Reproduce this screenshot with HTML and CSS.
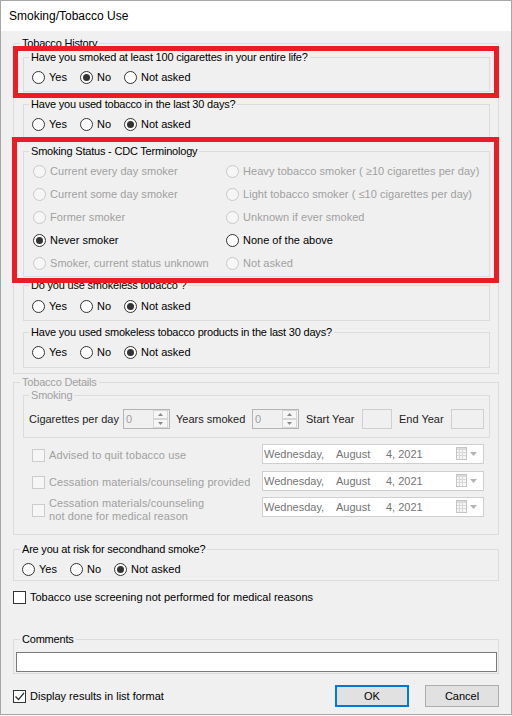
FILE: index.html
```html
<!DOCTYPE html>
<html lang="en">
<head>
    <meta charset="UTF-8">
    <title>Smoking/Tobacco Use</title>

    <link rel="stylesheet" href="styles.css">
</head>
<body>
    <div class="window">
        <div class="titlebar">Smoking/Tobacco Use</div>

        <div class="client">
            <!-- Tobacco History -->
            <fieldset class="group outer history">
                <legend>Tobacco History</legend>
                <div class="history-body">
                    <fieldset class="group question">
                        <legend>Have you smoked at least 100 cigarettes in your entire life?</legend>
                        <div class="radio-row">
                            <span class="radio"><span class="dot"></span>Yes</span>
                            <span class="radio checked"><span class="dot"></span>No</span>
                            <span class="radio"><span class="dot"></span>Not asked</span>
                        </div>
                    </fieldset>

                    <fieldset class="group question spaced">
                        <legend>Have you used tobacco in the last 30 days?</legend>
                        <div class="radio-row">
                            <span class="radio"><span class="dot"></span>Yes</span>
                            <span class="radio"><span class="dot"></span>No</span>
                            <span class="radio checked"><span class="dot"></span>Not asked</span>
                        </div>
                    </fieldset>

                    <fieldset class="group status spaced">
                        <legend>Smoking Status - CDC Terminology</legend>
                        <div class="status-grid">
                            <span class="radio off"><span class="dot"></span>Current every day smoker</span>
                            <span class="radio off"><span class="dot"></span>Heavy tobacco smoker ( ≥10 cigarettes per day)</span>
                            <span class="radio off"><span class="dot"></span>Current some day smoker</span>
                            <span class="radio off"><span class="dot"></span>Light tobacco smoker ( ≤10 cigarettes per day)</span>
                            <span class="radio off"><span class="dot"></span>Former smoker</span>
                            <span class="radio off"><span class="dot"></span>Unknown if ever smoked</span>
                            <span class="radio checked"><span class="dot"></span>Never smoker</span>
                            <span class="radio"><span class="dot"></span>None of the above</span>
                            <span class="radio off"><span class="dot"></span>Smoker, current status unknown</span>
                            <span class="radio off"><span class="dot"></span>Not asked</span>
                        </div>
                    </fieldset>

                    <fieldset class="group question smokeless">
                        <legend>Do you use smokeless tobacco ?</legend>
                        <div class="radio-row low">
                            <span class="radio"><span class="dot"></span>Yes</span>
                            <span class="radio"><span class="dot"></span>No</span>
                            <span class="radio checked"><span class="dot"></span>Not asked</span>
                        </div>
                    </fieldset>

                    <fieldset class="group question last30">
                        <legend>Have you used smokeless tobacco products in the last 30 days?</legend>
                        <div class="radio-row tall">
                            <span class="radio"><span class="dot"></span>Yes</span>
                            <span class="radio"><span class="dot"></span>No</span>
                            <span class="radio checked"><span class="dot"></span>Not asked</span>
                        </div>
                    </fieldset>
                </div>
            </fieldset>

            <!-- Tobacco Details (disabled) -->
            <fieldset class="group outer details off">
                <legend>Tobacco Details</legend>
                <div class="details-body">
                    <fieldset class="group off">
                        <legend>Smoking</legend>
                        <div class="smoking-row">
                            <span class="field-label w-cig">Cigarettes per day</span>
                            <span class="spin">
                                <span class="spin-value">0</span>
                                <svg class="spin-buttons" width="15" height="18" viewBox="0 0 15 18">
                                    <rect x="0.5" y="0.5" width="14" height="8" fill="#f6f6f6" stroke="#d6d6d6"/>
                                    <rect x="0.5" y="9.5" width="14" height="8" fill="#f6f6f6" stroke="#d6d6d6"/>
                                    <path d="M5 6h5l-2.5-3z" fill="#8a8a8a"/>
                                    <path d="M5 12h5l-2.5 3z" fill="#8a8a8a"/>
                                </svg>
                            </span>
                            <span class="field-label w-years">Years smoked</span>
                            <span class="spin">
                                <span class="spin-value">0</span>
                                <svg class="spin-buttons" width="15" height="18" viewBox="0 0 15 18">
                                    <rect x="0.5" y="0.5" width="14" height="8" fill="#f6f6f6" stroke="#d6d6d6"/>
                                    <rect x="0.5" y="9.5" width="14" height="8" fill="#f6f6f6" stroke="#d6d6d6"/>
                                    <path d="M5 6h5l-2.5-3z" fill="#8a8a8a"/>
                                    <path d="M5 12h5l-2.5 3z" fill="#8a8a8a"/>
                                </svg>
                            </span>
                            <span class="field-label w-start">Start Year</span>
                            <span class="year-box start"></span>
                            <span class="field-label w-end">End Year</span>
                            <span class="year-box end"></span>
                        </div>
                    </fieldset>

                    <div class="check-rows">
                        <div class="check-row">
                            <span class="check off"><span class="box"></span><span>Advised to quit tobacco use</span></span>
                            <span class="date">
                                <span class="d-day">Wednesday,</span><span class="d-month">August</span><span>4, 2021</span>
                                <svg class="cal" width="22" height="16" viewBox="0 0 22 16">
                                    <rect x="0.5" y="1.5" width="10" height="12" fill="#f6f6f6" stroke="#c4c4c4"/>
                                    <rect x="1" y="2" width="9" height="2" fill="#dadada"/>
                                    <path d="M1 6.5h9M1 9.5h9M3.5 4v9M6.5 4v9" stroke="#d8d8d8"/>
                                    <path d="M14 6h7l-3.5 4z" fill="#b4b4b4"/>
                                </svg>
                            </span>
                        </div>
                        <div class="check-row">
                            <span class="check off"><span class="box"></span><span>Cessation materials/counseling provided</span></span>
                            <span class="date">
                                <span class="d-day">Wednesday,</span><span class="d-month">August</span><span>4, 2021</span>
                                <svg class="cal" width="22" height="16" viewBox="0 0 22 16">
                                    <rect x="0.5" y="1.5" width="10" height="12" fill="#f6f6f6" stroke="#c4c4c4"/>
                                    <rect x="1" y="2" width="9" height="2" fill="#dadada"/>
                                    <path d="M1 6.5h9M1 9.5h9M3.5 4v9M6.5 4v9" stroke="#d8d8d8"/>
                                    <path d="M14 6h7l-3.5 4z" fill="#b4b4b4"/>
                                </svg>
                            </span>
                        </div>
                        <div class="check-row two-line">
                            <span class="check off"><span class="box"></span><span>Cessation materials/counseling<br>not done for medical reason</span></span>
                            <span class="date">
                                <span class="d-day">Wednesday,</span><span class="d-month">August</span><span>4, 2021</span>
                                <svg class="cal" width="22" height="16" viewBox="0 0 22 16">
                                    <rect x="0.5" y="1.5" width="10" height="12" fill="#f6f6f6" stroke="#c4c4c4"/>
                                    <rect x="1" y="2" width="9" height="2" fill="#dadada"/>
                                    <path d="M1 6.5h9M1 9.5h9M3.5 4v9M6.5 4v9" stroke="#d8d8d8"/>
                                    <path d="M14 6h7l-3.5 4z" fill="#b4b4b4"/>
                                </svg>
                            </span>
                        </div>
                    </div>
                </div>
            </fieldset>

            <!-- Secondhand smoke -->
            <fieldset class="group outer secondhand">
                <legend>Are you at risk for secondhand smoke?</legend>
                <div class="radio-row short">
                    <span class="radio"><span class="dot"></span>Yes</span>
                    <span class="radio"><span class="dot"></span>No</span>
                    <span class="radio checked"><span class="dot"></span>Not asked</span>
                </div>
            </fieldset>

            <div class="check-line">
                <span class="check"><span class="box"></span><span>Tobacco use screening not performed for medical reasons</span></span>
            </div>

            <!-- Comments -->
            <fieldset class="group outer comments">
                <legend>Comments</legend>
                <div class="comments-body">
                    <div class="textbox"></div>
                </div>
            </fieldset>

            <div class="footer">
                <span class="check">
                    <span class="box">
                        <svg width="11" height="11" viewBox="0 0 11 11">
                            <path d="M1.5 5.5l3 3 5.5-6.5" fill="none" stroke="#333" stroke-width="1.2"/>
                        </svg>
                    </span>
                    <span>Display results in list format</span>
                </span>
                <span class="btn default">OK</span>
                <span class="btn">Cancel</span>
            </div>
        </div>

        <!-- red highlight boxes drawn over the form -->
        <div class="mark mark-one"></div>
        <div class="mark mark-two"></div>
    </div>
</body>
</html>
```

FILE: styles.css
```css
body {
    margin: 0;
    font-family: "Liberation Sans", Arial, sans-serif;
    font-size: 11px;
    line-height: 13px;
    color: #000;
    background: #fff;
}
.window {
    position: relative;
    width: 510px;
    height: 713px;
    border: 1px solid #a6a6a6;
    background: #f0f0f0;
}
.titlebar {
    height: 30px;
    padding-left: 8px;
    background: #fff;
    font-size: 12px;
    line-height: 30px;
}
.client {
    padding: 0 12px;
}

/* group boxes */
.group {
    margin: 0;
    padding: 0;
    border: 1px solid #dcdcdc;
    min-width: 0;
}
.group legend {
    margin-left: 5px;
    padding: 0 2px;
    line-height: 13px;
    letter-spacing: -0.2px;
}
.group.outer > legend {
    margin-left: 6px;
}
.off > legend,
.off {
    color: #a0a0a0;
}
.history {
    margin-top: 6px;
}
.history-body {
    padding: 1px 8px 5px 9px;
}
.spaced {
    margin-top: 6px;
}
.smokeless {
    margin-top: 2px;
}
.last30 {
    margin-top: 5px;
}

/* radio buttons */
.radio-row {
    display: flex;
    align-items: center;
    gap: 13px;
    height: 16px;
    padding: 5px 0 6px 8px;
}
.radio-row.low {
    padding-top: 6px;
}
.radio-row.tall {
    padding-bottom: 7px;
}
.radio-row.short {
    padding-bottom: 3px;
}
.radio {
    display: flex;
    align-items: center;
    white-space: nowrap;
}
.dot {
    display: flex;
    align-items: center;
    justify-content: center;
    width: 11px;
    height: 11px;
    margin-right: 4px;
    border: 1px solid #333;
    border-radius: 50%;
    background: #fff;
}
.checked .dot::after {
    content: "";
    width: 7px;
    height: 7px;
    border-radius: 50%;
    background: #333;
}
.radio.off {
    color: #a0a0a0;
    letter-spacing: 0.05px;
}
.radio.off .dot {
    border-color: #c8c8c8;
    background: #f6f6f6;
}
.status-grid {
    display: grid;
    grid-template-columns: 193px 1fr;
    grid-auto-rows: 23px;
    padding: 2px 0 1px 9px;
}

/* tobacco details */
.details {
    margin-top: 2px;
}
.details-body {
    padding: 0 8px 11px 9px;
}
.smoking-row {
    display: flex;
    align-items: center;
    height: 20px;
    padding: 7px 0 8px 5px;
    color: #222;
}
.field-label {
    flex: none;
    white-space: nowrap;
}
.w-cig { width: 94px; }
.w-years { width: 76px; margin-left: 6px; }
.w-start { width: 56px; margin-left: 7px; }
.w-end { width: 52px; margin-left: 7px; }
.spin {
    display: flex;
    align-items: center;
    box-sizing: border-box;
    width: 47px;
    height: 20px;
    border: 1px solid #b4b4b4;
    background: #f0f0f0;
}
.spin-value {
    flex: 1;
    padding-left: 2px;
    color: #a0a0a0;
}
.spin-buttons {
    margin-right: 1px;
}
.year-box {
    box-sizing: border-box;
    height: 20px;
    border: 1px solid #cfcfcf;
    background: #f0f0f0;
}
.year-box.start { width: 30px; }
.year-box.end { width: 33px; }

.check-rows {
    margin-top: 6px;
    padding-left: 9px;
}
.check-row {
    display: flex;
    align-items: flex-start;
    height: 27px;
}
.check-row + .check-row {
    height: 26px;
}
.check {
    display: flex;
    align-items: center;
    white-space: nowrap;
}
.check-row .check {
    width: 230px;
    min-height: 22px;
    letter-spacing: 0.1px;
}
.check-row.two-line .check {
    min-height: 26px;
}
.box {
    display: flex;
    align-items: center;
    justify-content: center;
    flex: none;
    width: 11px;
    height: 11px;
    margin-right: 4px;
    border: 1px solid #333;
    background: #fff;
}
.check.off .box {
    border-color: #cccccc;
    background: #f6f6f6;
}
.date {
    display: flex;
    align-items: center;
    box-sizing: border-box;
    width: 222px;
    height: 20px;
    padding: 0 5px 0 1px;
    border: 1px solid #cfcfcf;
    background: #fff;
    color: #747474;
    white-space: nowrap;
}
.d-day { width: 72px; }
.d-month { width: 50px; }
.cal {
    margin-left: auto;
}

/* bottom part */
.secondhand {
    margin-top: 8px;
}
.check-line {
    display: flex;
    align-items: center;
    height: 16px;
    margin-top: 8px;
}
.comments {
    margin-top: 28px;
}
.comments-body {
    padding: 6px 1px 1px 2px;
}
.textbox {
    box-sizing: border-box;
    height: 20px;
    border: 1px solid #7a7a7a;
    background: #fff;
}
.footer {
    display: flex;
    align-items: center;
    height: 22px;
    margin-top: 11px;
}
.btn {
    display: flex;
    align-items: center;
    justify-content: center;
    box-sizing: border-box;
    width: 74px;
    height: 22px;
    border: 1px solid #adadad;
    background: #e1e1e1;
}
.btn.default {
    margin-left: auto;
    margin-right: 16px;
    border: 2px solid #0078d7;
}

/* red highlight rectangles */
.mark {
    position: absolute;
    box-sizing: border-box;
    border: 5px solid #ed1c24;
}
.mark-one {
    left: 12px;
    top: 45px;
    width: 486px;
    height: 52px;
}
.mark-two {
    left: 11px;
    top: 136px;
    width: 487px;
    height: 146px;
}
```
